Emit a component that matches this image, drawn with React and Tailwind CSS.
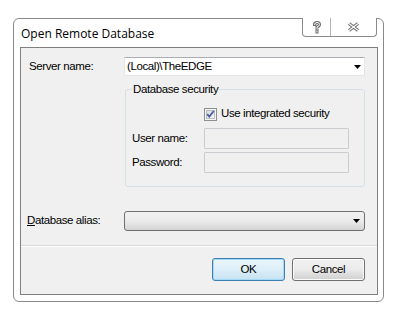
import React from "react";

const font = { fontFamily: '"Liberation Sans", Arial, sans-serif' };

function Arrow() {
  return (
    <svg width="7" height="4" viewBox="0 0 7 4" className="block">
      <path d="M0 0 H7 L3.5 4 Z" fill="#000" />
    </svg>
  );
}

export default function App() {
  return (
    <div className="w-[414px] h-[317px] bg-white overflow-hidden pt-[18px] pl-[13px]">
      <div className="w-[371px] h-[284px] border border-[#8a8a8a] rounded-[6px] bg-white flex flex-col relative">
        {/* title bar */}
        <div className="h-[28px] flex items-center pl-[7px] pt-[2px]">
          <span className="text-[12px] text-black" style={{ fontFamily: '"Open Sans", "Noto Sans", sans-serif' }}>
            Open Remote Database
          </span>
        </div>
        {/* caption buttons */}
        <div className="absolute top-[-1px] right-[6px] h-[19px] flex border border-[#8a8a8a] border-t-0 rounded-b-[4px] bg-white">
          <div className="w-[28px] h-full flex items-center justify-center border-r border-[#b5b5b5]">
            <svg width="10" height="13" viewBox="0 0 10 13">
              <path d="M2.5 3.5 Q2.5 1.5 5 1.5 Q7.5 1.5 7.5 3.5 Q7.5 5 5 6 V8 M5 10 V11" fill="none" stroke="#6b6b6b" strokeWidth="3" strokeLinecap="square" />
              <path d="M2.5 3.5 Q2.5 1.5 5 1.5 Q7.5 1.5 7.5 3.5 Q7.5 5 5 6 V8 M5 10 V11" fill="none" stroke="#fff" strokeWidth="1" strokeLinecap="square" />
            </svg>
          </div>
          <div className="w-[45px] h-full flex items-center justify-center">
            <svg width="13" height="10" viewBox="0 0 13 10">
              <path d="M2 1.5 L11 8.5 M11 1.5 L2 8.5" fill="none" stroke="#6b6b6b" strokeWidth="3.2" />
              <path d="M2 1.5 L11 8.5 M11 1.5 L2 8.5" fill="none" stroke="#fff" strokeWidth="1.1" />
            </svg>
          </div>
        </div>
        {/* client panel */}
        <div className="ml-[6px] mr-[5px] h-[248px] border border-[#7f7f7f] bg-[#f0f0f0] flex flex-col text-[11.5px] tracking-[-0.4px] text-black" style={font}>
          <div className="mt-[9px] flex items-center h-[19px]">
            <span className="w-[103px] pl-[8px]">Server name:</span>
            <div className="w-[241px] h-[19px] bg-white border border-[#e2e6ea] border-t-[#abadb3] flex items-center pl-[2px] pr-[3px]">
              <span className="flex-1">(Local)\TheEDGE</span>
              <Arrow />
            </div>
          </div>
          {/* group box */}
          <div className="mt-[13px] ml-[104px] w-[240px] h-[98px] border border-[#d5dfe5] rounded-[3px] relative">
            <span className="absolute -top-[8px] left-[6px] bg-[#f0f0f0] px-[1px] leading-[14px]">Database security</span>
            <div className="mt-[17px] ml-[78px] flex items-center gap-[4px] h-[14px]">
              <svg width="13" height="13" viewBox="0 0 13 13">
                <defs>
                  <linearGradient id="cb" x1="0" y1="0" x2="1" y2="1">
                    <stop offset="0" stopColor="#d4d8dd" />
                    <stop offset="1" stopColor="#f6f7f8" />
                  </linearGradient>
                </defs>
                <rect x="0.5" y="0.5" width="12" height="12" fill="#f4f4f4" stroke="#8f8f8f" />
                <rect x="2.5" y="2.5" width="8" height="8" fill="url(#cb)" stroke="#b9bec4" />
                <path d="M3.2 6.2 L5.3 8.6 L9.8 3" fill="none" stroke="#4a5f9a" strokeWidth="1.8" />
              </svg>
              <span>Use integrated security</span>
            </div>
            <div className="mt-[7px] flex items-center h-[21px]">
              <span className="w-[78px] pl-[6px]">User name:</span>
              <div className="w-[145px] h-[21px] bg-[#f0f0f0] border border-[#c9ccd0] rounded-[1px]" />
            </div>
            <div className="mt-[3px] flex items-center h-[21px]">
              <span className="w-[78px] pl-[6px]">Password:</span>
              <div className="w-[145px] h-[21px] bg-[#f0f0f0] border border-[#c9ccd0] rounded-[1px]" />
            </div>
          </div>
          <div className="mt-[24px] flex items-center h-[20px]">
            <span className="w-[103px] pl-[6px]">
              <span className="underline underline-offset-[1px]">D</span>atabase alias:
            </span>
            <div className="w-[241px] h-[20px] border border-[#707070] rounded-[3px] bg-gradient-to-b from-[#f2f2f2] via-[#ebebeb] to-[#d4d4d4] flex items-center justify-end pr-[4px]">
              <Arrow />
            </div>
          </div>
          <div className="mt-[14px] h-[2px] border-t border-[#d9d9d9] bg-white" />
          <div className="flex-1 flex items-start justify-end gap-[7px] pr-[12px] pt-[11px]">
            <div className="w-[73px] h-[23px] rounded-[3px] border border-[#3c7fb1] bg-gradient-to-b from-[#eaf6fd] via-[#dceef8] to-[#c7e2f2] flex items-center justify-center shadow-[inset_0_0_0_1px_#a5d8f4]">
              <span>OK</span>
            </div>
            <div className="w-[73px] h-[23px] rounded-[3px] border border-[#707070] bg-gradient-to-b from-[#f2f2f2] via-[#ebebeb] to-[#cfcfcf] flex items-center justify-center shadow-[inset_0_0_0_1px_#fcfcfc]">
              <span>Cancel</span>
            </div>
          </div>
        </div>
      </div>
    </div>
  );
}
